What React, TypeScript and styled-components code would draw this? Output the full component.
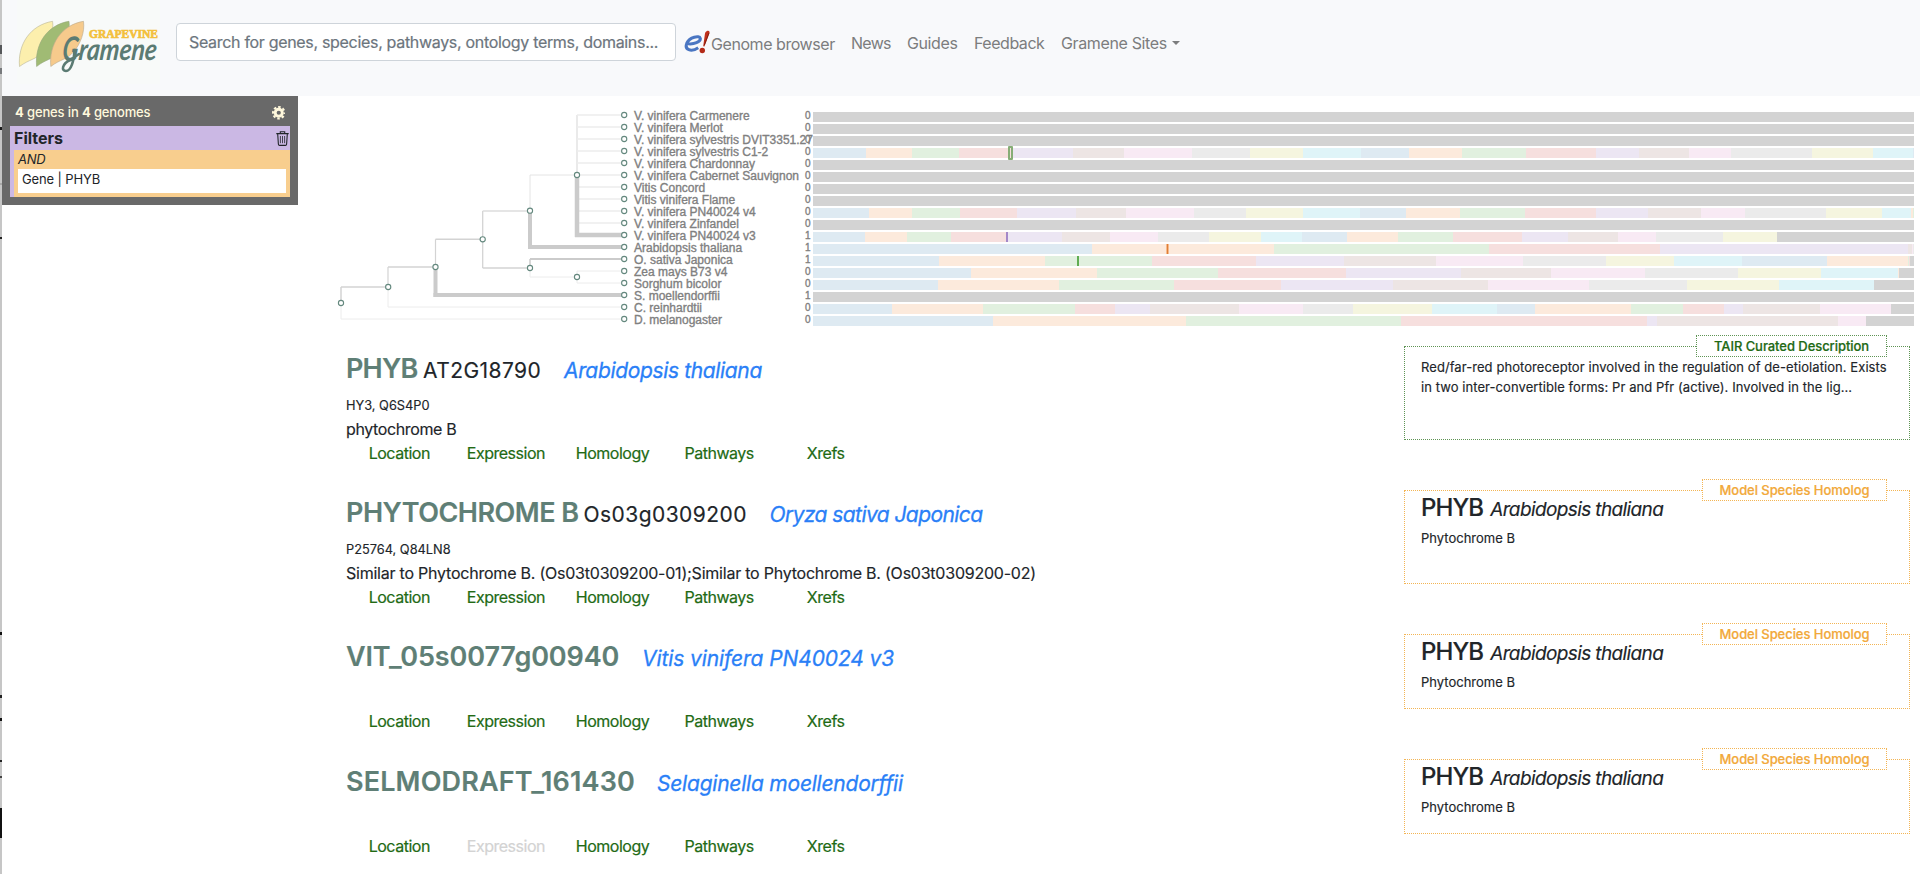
import React from 'react';
import styled, { createGlobalStyle } from 'styled-components';

const GlobalStyle = createGlobalStyle`
  * { box-sizing: border-box; }
  body {
    margin: 0;
    background: #fff;
    color: #212529;
    font: 400 16px/24px Inter, "Liberation Sans", sans-serif;
    overflow: hidden;
  }
`;

const Page = styled.div`
  display: flex;
  height: 874px;
`;

/* Sliver of the neighbouring window along the left edge. */
const stripMarks: [number, number, string][] = [
  [45, 54, '#55575a'], [68, 74, '#77797c'], [127, 130, '#1c1c1c'], [183, 185, '#a8a8a8'],
  [237, 239, '#222'], [632, 635, '#111'], [695, 698, '#222'], [718, 721, '#111'],
  [760, 762, '#222'], [776, 778, '#444'], [808, 838, '#111'],
];
const WindowEdge = styled.div`
  flex: 0 0 2px;
  background: linear-gradient(
    to bottom,
    ${stripMarks.map(([a, b, c]) => `#c6c6c6 ${a}px, ${c} ${a}px, ${c} ${b}px, #c6c6c6 ${b}px`).join(', ')}
  );
`;

const Content = styled.div`
  flex: 1;
  min-width: 0;
`;

const Header = styled.header`
  display: flex;
  height: 96px;
  padding-left: 15px;
  background: #f8f9fb;
`;

const LogoBox = styled.a`
  width: 143px;
  height: 84px;
  background: #f8faf9;
  svg { display: block; overflow: visible; }
`;

const SearchBox = styled.div`
  width: 500px;
  height: 38px;
  margin: 23px 0 0 16px;
  padding: 6px 12px;
  border: 1px solid #ced4da;
  border-radius: 4px;
  background: #fff;
  color: #6c757d;
  letter-spacing: -0.315px;
  white-space: nowrap;
  -webkit-text-stroke: 0.2px currentColor;
`;

const Nav = styled.nav`
  display: flex;
  padding: 31px 0 0 8px;
  color: #7c7d7e;
`;

const NavLink = styled.a<{ $width: number; $track: number }>`
  display: flex;
  width: ${p => p.$width}px;
  margin-right: 17px;
  letter-spacing: ${p => p.$track}px;
  white-space: nowrap;
`;

const BrowserLink = styled(NavLink)`
  padding-top: 1px;
  svg { flex: none; margin: -2px 1px 0 0; }
`;

const Caret = styled.span`
  margin: 10px 0 0 5px;
  width: 0;
  height: 0;
  border: 4.5px solid transparent;
  border-top-color: currentColor;
  border-bottom: 0;
`;

const Body = styled.div`
  display: flex;
  align-items: flex-start;
`;

const Sidebar = styled.aside`
  flex: 0 0 296px;
  height: 109px;
  padding: 0 8px;
  background: #696969;
  font-size: 13px;
`;

const SidebarTop = styled.div`
  display: flex;
  justify-content: space-between;
  align-items: center;
  height: 30px;
  padding: 1px 5px 0 5px;
  color: #fff8dc;
  font-weight: 500;
  letter-spacing: -0.14px;
  b { font-weight: 700; }
  svg { margin-top: 3px; }
`;

const Filters = styled.div`
  height: 71px;
  padding-left: 4px;
  background: #cbb8e4;
`;

const FiltersTitle = styled.div`
  display: flex;
  justify-content: space-between;
  height: 24px;
  padding-right: 1.5px;
  font-size: 16px;
  font-weight: 700;
  svg { margin-top: 5px; }
`;

const AndGroup = styled.div`
  height: 47px;
  padding: 0 4px;
  background: #f8ce8e;
`;

const AndLabel = styled.div`
  height: 19px;
  line-height: 19px;
  font-style: italic;
  letter-spacing: -0.3px;
`;

const Clause = styled.div`
  height: 24px;
  padding-left: 4px;
  line-height: 21px;
  background: #fff;
  letter-spacing: -0.13px;
`;

const Main = styled.main`
  flex: 1;
  min-width: 0;
  padding: 13px 0 0 32px;
`;

const Viz = styled.section`
  display: flex;
  align-items: flex-start;
  height: 237px;
`;

const TreeSvg = styled.svg`
  flex: none;
  display: block;
`;

const NameColumn = styled.div`
  width: 171px;
  padding: 1px 0 0 4px;
  color: #808080;
  font: 12px/12px "Liberation Sans", Arial, sans-serif;
  -webkit-text-stroke: 0.35px #808080;
  white-space: nowrap;
`;

const CountColumn = styled.div`
  width: 12px;
  color: #808080;
  padding: 1px 0 0 4px;
  font: 10px/12px "Liberation Sans", Arial, sans-serif;
  -webkit-text-stroke: 0.35px #808080;
`;

const BarColumn = styled.div`
  display: grid;
  grid-auto-rows: 10px;
  gap: 2px;
  width: 1101px;
  margin-top: 3px;
`;

const Bar = styled.div`
  position: relative;
  display: flex;
  background: #d3d3d3;
`;

const Segment = styled.i<{ $w: number; $color: string }>`
  width: ${p => p.$w}px;
  background: ${p => p.$color};
`;

const Hit = styled.i<{ $x: number; $color: string; $w: number; $edge: string }>`
  position: absolute;
  top: 0;
  bottom: 0;
  left: ${p => p.$x}px;
  width: ${p => p.$w}px;
  background: ${p => p.$color};
  box-shadow: -1px 0 ${p => p.$edge}, 1px 0 ${p => p.$edge};
`;

const Selection = styled.i<{ $x: number }>`
  position: absolute;
  top: -2px;
  left: ${p => p.$x}px;
  width: 5px;
  height: 14px;
  border: 2px solid #86ad76;
  border-radius: 1px;
`;

const Entry = styled.article<{ $height: number }>`
  display: flex;
  justify-content: space-between;
  width: 1580px;
  height: ${p => p.$height}px;
`;

const Gene = styled.div`
  display: flex;
  flex-direction: column;
  padding: 7px 0 26px 16px;
  white-space: nowrap;
  -webkit-text-stroke: 0.15px currentColor;
`;

const GeneTitle = styled.h3`
  display: flex;
  align-items: baseline;
  height: 32px;
  margin: 0 0 10px;
  font-weight: 400;
  line-height: 32px;
`;

const GeneName = styled.span<{ $width: number; $track: number }>`
  width: ${p => p.$width}px;
  color: #5f7f76;
  font-size: 27px;
  font-weight: 600;
  letter-spacing: ${p => p.$track}px;
`;

const GeneId = styled.span<{ $width: number }>`
  width: ${p => p.$width}px;
  font-size: 21px;
  letter-spacing: 0.45px;
`;

const Species = styled.a<{ $track: number }>`
  color: #2a7ff7;
  font-size: 21px;
  font-style: italic;
  letter-spacing: ${p => p.$track}px;
  -webkit-text-stroke: 0.3px currentColor;
`;

const Synonyms = styled.div`
  font-size: 12.8px;
  line-height: 22px;
`;

const Description = styled.div<{ $track: number }>`
  letter-spacing: ${p => p.$track}px;
`;

const Links = styled.div`
  display: flex;
  margin-top: auto;
`;

const DetailLink = styled.a<{ $off?: boolean }>`
  width: 106.6px;
  color: ${p => (p.$off ? '#d3d3d3' : '#226a14')};
  text-align: center;
  letter-spacing: -0.48px;
  -webkit-text-stroke: 0.2px currentColor;
`;

const Card = styled.div<{ $line: string }>`
  position: relative;
  width: 506px;
  margin-bottom: 50px;
  padding-left: 16px;
  border: 1px dotted ${p => p.$line};
  font-size: 13px;
  line-height: 20px;
  white-space: nowrap;
  -webkit-text-stroke: 0.15px currentColor;
`;

const CardTag = styled.div<{ $color: string; $line: string; $width: number }>`
  position: absolute;
  top: -12px;
  right: 22px;
  width: ${p => p.$width}px;
  height: 22px;
  border: 1px dotted ${p => p.$line};
  background: #fff;
  color: ${p => p.$color};
  font-weight: 500;
  letter-spacing: -0.06px;
  -webkit-text-stroke: 0.2px currentColor;
  text-align: center;
`;

const Curated = styled.p`
  margin: 10px 0 0;
  letter-spacing: 0.07px;
`;

const HomologTitle = styled.h4`
  display: flex;
  align-items: baseline;
  gap: 7px;
  height: 28px;
  margin: 2.5px 0 6.5px;
  font-size: 24px;
  font-weight: 500;
  line-height: 28px;
  letter-spacing: -0.9px;
  em { font-size: 19px; font-weight: 400; letter-spacing: -0.62px; }
`;

const palette = ['#deeaf2', '#fceadc', '#e1f0df', '#f6dfde', '#ece6f3', '#ede5e4', '#f8eaf4', '#ebebeb', '#f5f5df', '#dff4f8'];

interface Genome { name: string; count: number; ends: number[] }

/* Region ends are pixel offsets along a 1101px wide genome track. */
const genomes: Genome[] = [
  { name: 'V. vinifera Carmenere', count: 0, ends: [] },
  { name: 'V. vinifera Merlot', count: 0, ends: [] },
  { name: 'V. vinifera sylvestris DVIT3351.27', count: 0, ends: [] },
  { name: 'V. vinifera sylvestris C1-2', count: 0, ends: [53, 99, 146, 198, 260, 311, 379, 437, 490, 548, 596, 649, 713, 783, 826, 876, 918, 999, 1060, 1100, 1101] },
  { name: 'V. vinifera Chardonnay', count: 0, ends: [] },
  { name: 'V. vinifera Cabernet Sauvignon', count: 0, ends: [] },
  { name: 'Vitis Concord', count: 0, ends: [] },
  { name: 'Vitis vinifera Flame', count: 0, ends: [] },
  { name: 'V. vinifera PN40024 v4', count: 0, ends: [56, 99, 147, 204, 263, 313, 381, 433, 490, 547, 593, 647, 712, 783, 835, 888, 932, 1013, 1069, 1098, 1098, 1100, 1101] },
  { name: 'V. vinifera Zinfandel', count: 0, ends: [] },
  { name: 'V. vinifera PN40024 v3', count: 1, ends: [52, 94, 138, 193, 249, 297, 345, 396, 448, 489, 534, 585, 640, 709, 755, 805, 843, 910, 964] },
  { name: 'Arabidopsis thaliana', count: 1, ends: [279, 461, 676, 847, 1095, 1099, 1100, 1101] },
  { name: 'O. sativa Japonica', count: 1, ends: [126, 232, 339, 443, 531, 623, 710, 793, 861, 929, 1014, 1095, 1096, 1097] },
  { name: 'Zea mays B73 v4', count: 0, ends: [158, 284, 405, 533, 648, 738, 832, 925, 1008, 1085, 1085, 1086] },
  { name: 'Sorghum bicolor', count: 0, ends: [125, 246, 361, 468, 580, 675, 776, 874, 966, 1061] },
  { name: 'S. moellendorffii', count: 1, ends: [] },
  { name: 'C. reinhardtii', count: 0, ends: [79, 170, 262, 302, 337, 426, 490, 540, 619, 684, 722, 818, 870, 911, 930, 1007, 1078] },
  { name: 'D. melanogaster', count: 0, ends: [180, 373, 588, 834, 844, 1025, 1053] },
];

const hits: Record<number, React.ReactNode> = {
  3: <Selection $x={195} />,
  10: <Hit $x={193} $w={2} $color="#a488c8" $edge="transparent" />,
  11: <Hit $x={354} $w={1} $color="#dd7f38" $edge="#f6b98a" />,
  12: <Hit $x={264} $w={2} $color="#60ad52" $edge="transparent" />,
};

const leafY = (row: number) => 6 + row * 12;

/* Branches as [x1, y1, x2, y2, thickness, colour]. */
const branches: [number, number, number, number, number, string][] = [
  [11, 194, 11, 178, 1.5, '#d3d3d3'], [11, 178, 58, 178, 1.5, '#d3d3d3'],
  [11, 194, 11, 210, 1, '#ececec'], [11, 210, 294, 210, 1, '#ececec'],
  [58, 178, 58, 158, 1.2, '#d3d3d3'], [58, 158, 105.5, 158, 1.5, '#d3d3d3'],
  [58, 178, 58, 198, 1, '#ececec'], [58, 198, 294, 198, 1, '#ececec'],
  [105.5, 158, 105.5, 130.3, 1.2, '#d3d3d3'], [105.5, 130.3, 152.7, 130.3, 1.5, '#d3d3d3'],
  [105.5, 158, 105.5, 188, 4, '#cbcbcb'], [103.5, 186, 294, 186, 4, '#cbcbcb'],
  [152.7, 130.3, 152.7, 102, 1.3, '#d3d3d3'], [152.7, 102, 200, 102, 1.3, '#dcdcdc'],
  [152.7, 130.3, 152.7, 159, 1.3, '#d3d3d3'], [152.7, 159, 200, 159, 1.5, '#d3d3d3'],
  [200, 102, 200, 66, 1, '#e4e4e4'], [200, 66, 247, 66, 1, '#e4e4e4'],
  [200, 102, 200, 140, 4, '#cbcbcb'], [198, 138, 294, 138, 4, '#cbcbcb'],
  [200, 159, 200, 150, 1.5, '#cbcbcb'], [200, 150, 294, 150, 1.8, '#cbcbcb'],
  [200, 159, 200, 168, 1, '#ececec'], [200, 168, 247, 168, 1, '#ececec'],
  [247, 162, 247, 174, 1, '#ececec'], [247, 162, 294, 162, 1, '#ececec'], [247, 174, 294, 174, 1, '#ececec'],
  [247, 6, 247, 66, 1.2, '#dcdcdc'],
  ...[0, 1, 2, 3, 4, 5, 6, 7, 8, 9].map(r => [247, leafY(r), 294, leafY(r), 1.3, '#ececec'] as [number, number, number, number, number, string]),
  [247, 66, 247, 128, 4.5, '#cbcbcb'], [245, 126, 294, 126, 4.5, '#cbcbcb'],
];

const nodes: [number, number][] = [
  [11, 194], [58.2, 178], [105.5, 158], [152.7, 130.3], [200, 101.7], [200, 159], [247, 168], [247, 66],
  ...genomes.map((_, r) => [294.2, leafY(r)] as [number, number]),
];

const Tree = () => (
  <TreeSvg width="300" height="220" viewBox="0 0 300 220">
    {branches.map(([x1, y1, x2, y2, w, c], i) => (
      <line key={i} x1={x1} y1={y1} x2={x2} y2={y2} stroke={c} strokeWidth={w} />
    ))}
    {nodes.map(([x, y], i) => (
      <circle key={i} cx={x} cy={y} r="2.6" fill="#fff" stroke="#64887e" strokeWidth="1.1" />
    ))}
  </TreeSvg>
);

const leaf = (bx: number, tx: number) =>
  `M${bx} 66.5C${bx - 2} 44 ${tx - 22} 25 ${tx} 21.3C${tx + 1.5} 32 ${tx - 3} 44 ${tx - 10} 52C${tx - 17} 60 ${tx - 23} 59 ${bx} 66.5Z`;

const GrameneLogo = () => (
  <svg width="143" height="84" viewBox="17 0 143 84">
    <path d={leaf(19.5, 52.6)} fill="#fcefad" stroke="#b9b69a" strokeWidth=".6" />
    <path d={leaf(36.6, 69)} fill="#a0bb74" stroke="#93a67c" strokeWidth=".6" />
    <path d={leaf(50.8, 83.5)} fill="#f6ca8c" stroke="#b9a88c" strokeWidth=".6" />
    <text x="89" y="38" fontFamily="Liberation Serif, serif" fontWeight="700" fontSize="12.5" fill="#f3c03c" stroke="#f3c03c" strokeWidth=".7" textLength="69" lengthAdjust="spacingAndGlyphs">GRAPEVINE</text>
    <g transform="translate(0 60) skewX(-6)" fontFamily="Lato, sans-serif" fontStyle="italic" fontWeight="700" fill="#5b7b73">
      <text x="61.5" y="1" fontSize="34" textLength="16" lengthAdjust="spacingAndGlyphs">G</text>
      <text x="78" y="0" fontSize="30" textLength="78" lengthAdjust="spacingAndGlyphs">ramene</text>
    </g>
    <path d="M74.5 50C74 61 71 71 66 71C61 71 62 64 70 60L79 54" fill="none" stroke="#5b7b73" strokeWidth="2.6" strokeLinecap="round" />
  </svg>
);

const EnsemblIcon = () => (
  <svg width="26" height="24" viewBox="0 0 26 24">
    <path d="M2.7 13.6C10 15 17 11.6 16.3 8.3C15.4 5 5.6 7 2.8 13.2C.2 19.5 7 22.6 14.2 17.7" fill="none" stroke="#4a76c2" strokeWidth="3" />
    <path d="M22.6 1.3C24.6.2 26 1.2 25.5 3.2L20.4 16.4L19.2 16.2L20.9 4C21.2 2.4 21.6 1.8 22.6 1.3Z" fill="#c1301a" />
    <path d="M24.8 3.2L20.3 15.2" stroke="#6d1a10" strokeWidth=".8" />
    <circle cx="18.3" cy="20.5" r="2.7" fill="#b32a18" />
  </svg>
);

const GearIcon = () => (
  <svg width="13.5" height="13.5" viewBox="0 0 16 16" fill="none" stroke="currentColor">
    <circle cx="8" cy="8" r="4.2" strokeWidth="3.4" />
    <circle cx="8" cy="8" r="6.8" strokeWidth="2.4" strokeDasharray="3 2.34" strokeDashoffset="1.5" />
  </svg>
);

const TrashIcon = () => (
  <svg width="13" height="15" viewBox="0 0 13 15" fill="none" stroke="#212529">
    <path d="M.3 2.6H12.7M4.3 2.4V.8H8.7V2.4M1.7 3L2.4 13.2Q2.5 14.4 3.6 14.4H9.4Q10.5 14.4 10.6 13.2L11.3 3" strokeWidth="1.1" />
    <path d="M4.4 5V12.2M6.5 5V12.2M8.6 5V12.2" strokeWidth=".8" />
  </svg>
);

interface GeneEntry {
  name: string; nameWidth: number; nameTrack: number;
  id?: string; idWidth?: number;
  species: string; speciesTrack: number;
  synonyms?: string; description?: string; descriptionTrack?: number;
  height: number; noExpression?: boolean; curated?: boolean;
}

const entries: GeneEntry[] = [
  { name: 'PHYB', nameWidth: 77, nameTrack: -0.8, id: 'AT2G18790', idWidth: 141, species: 'Arabidopsis thaliana', speciesTrack: -0.35, synonyms: 'HY3, Q6S4P0', description: 'phytochrome B', descriptionTrack: -0.38, height: 144, curated: true },
  { name: 'PHYTOCHROME B', nameWidth: 237.5, nameTrack: -0.5, id: 'Os03g0309200', idWidth: 186, species: 'Oryza sativa Japonica', speciesTrack: -0.57, synonyms: 'P25764, Q84LN8', description: 'Similar to Phytochrome B. (Os03t0309200-01);Similar to Phytochrome B. (Os03t0309200-02)', descriptionTrack: -0.227, height: 144 },
  { name: 'VIT_05s0077g00940', nameWidth: 296, nameTrack: -0.13, species: 'Vitis vinifera PN40024 v3', speciesTrack: -0.1, height: 125 },
  { name: 'SELMODRAFT_161430', nameWidth: 311, nameTrack: 0.14, species: 'Selaginella moellendorffii', speciesTrack: -0.22, height: 125, noExpression: true },
];

const GREEN = '#226a14';
const GREEN_LINE = '#5f9455';
const ORANGE = '#f2a93b';
const ORANGE_LINE = '#f3b555';

export default function App() {
  return (
    <>
      <GlobalStyle />
      <Page>
        <WindowEdge />
        <Content>
          <Header>
            <LogoBox><GrameneLogo /></LogoBox>
            <SearchBox>Search for genes, species, pathways, ontology terms, domains...</SearchBox>
            <Nav>
              <BrowserLink $width={150} $track={-0.44}><EnsemblIcon />Genome browser</BrowserLink>
              <NavLink $width={39} $track={-0.7}>News</NavLink>
              <NavLink $width={50} $track={-0.4}>Guides</NavLink>
              <NavLink $width={70} $track={-0.47}>Feedback</NavLink>
              <NavLink $width={120} $track={-0.36}>Gramene Sites<Caret /></NavLink>
            </Nav>
          </Header>
          <Body>
            <Sidebar>
              <SidebarTop><span><b>4</b> genes in <b>4</b> genomes</span><GearIcon /></SidebarTop>
              <Filters>
                <FiltersTitle>Filters<TrashIcon /></FiltersTitle>
                <AndGroup>
                  <AndLabel>AND</AndLabel>
                  <Clause>Gene | PHYB</Clause>
                </AndGroup>
              </Filters>
            </Sidebar>
            <Main>
              <Viz>
                <Tree />
                <NameColumn>{genomes.map(g => <div key={g.name}>{g.name}</div>)}</NameColumn>
                <CountColumn>{genomes.map(g => <div key={g.name}>{g.count}</div>)}</CountColumn>
                <BarColumn>
                  {genomes.map((g, row) => (
                    <Bar key={g.name}>
                      {g.ends.map((end, i) => (
                        <Segment key={i} $w={end - (i ? g.ends[i - 1] : 0)} $color={palette[i % 10]} />
                      ))}
                      {hits[row]}
                    </Bar>
                  ))}
                </BarColumn>
              </Viz>
              {entries.map(e => (
                <Entry key={e.name} $height={e.height}>
                  <Gene>
                    <GeneTitle>
                      <GeneName $width={e.nameWidth} $track={e.nameTrack}>{e.name}</GeneName>
                      {e.id && <GeneId $width={e.idWidth ?? 0}>{e.id}</GeneId>}
                      <Species $track={e.speciesTrack}>{e.species}</Species>
                    </GeneTitle>
                    {e.synonyms && <Synonyms>{e.synonyms}</Synonyms>}
                    {e.description && <Description $track={e.descriptionTrack ?? 0}>{e.description}</Description>}
                    <Links>
                      <DetailLink>Location</DetailLink>
                      <DetailLink $off={e.noExpression}>Expression</DetailLink>
                      <DetailLink>Homology</DetailLink>
                      <DetailLink>Pathways</DetailLink>
                      <DetailLink>Xrefs</DetailLink>
                    </Links>
                  </Gene>
                  {e.curated ? (
                    <Card $line={GREEN_LINE}>
                      <CardTag $color={GREEN} $line={GREEN_LINE} $width={191}>TAIR Curated Description</CardTag>
                      <Curated>
                        Red/far-red photoreceptor involved in the regulation of de-etiolation. Exists<br />
                        in two inter-convertible forms: Pr and Pfr (active). Involved in the lig...
                      </Curated>
                    </Card>
                  ) : (
                    <Card $line={ORANGE_LINE}>
                      <CardTag $color={ORANGE} $line={ORANGE_LINE} $width={185}>Model Species Homolog</CardTag>
                      <HomologTitle>PHYB <em>Arabidopsis thaliana</em></HomologTitle>
                      Phytochrome B
                    </Card>
                  )}
                </Entry>
              ))}
            </Main>
          </Body>
        </Content>
      </Page>
    </>
  );
}
